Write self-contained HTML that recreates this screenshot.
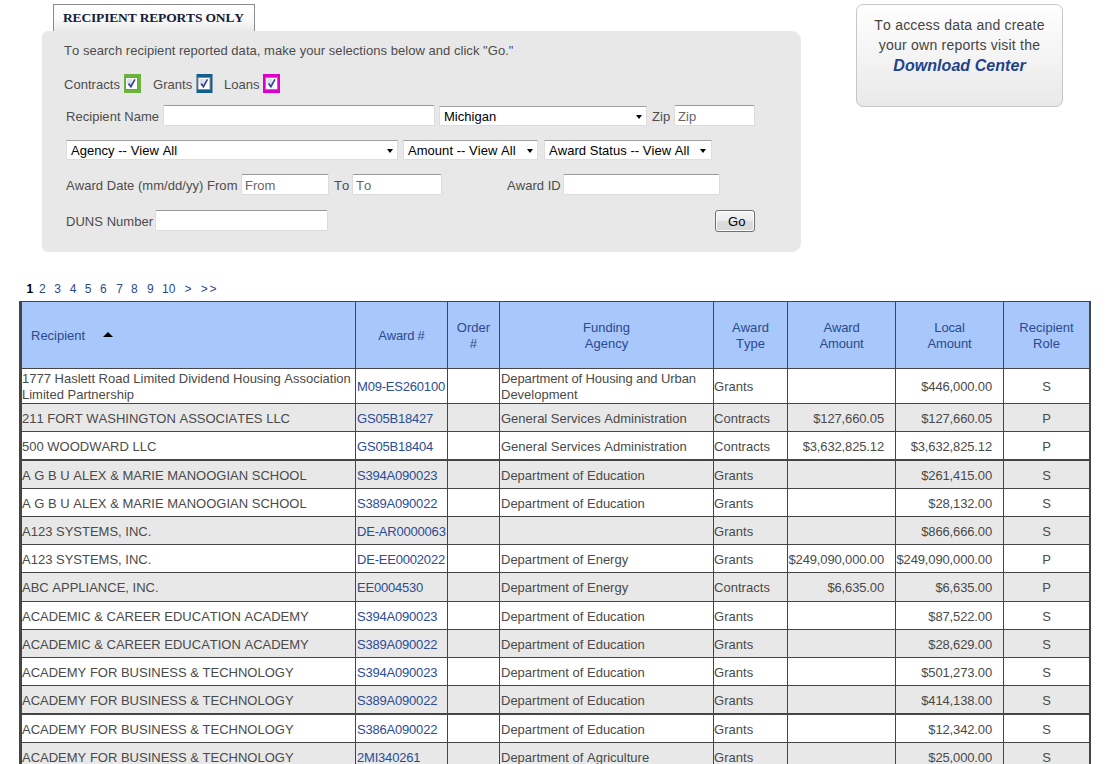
<!DOCTYPE html>
<html><head><meta charset="utf-8">
<style>
*{box-sizing:border-box;margin:0;padding:0}
html,body{width:1108px;height:764px;overflow:hidden;background:#fff}
body{position:relative;font-family:"Liberation Sans",sans-serif;font-size:13px;color:#333;letter-spacing:0.04px;font-kerning:none}
.abs{position:absolute;white-space:nowrap}
#tab{position:absolute;left:53px;top:4px;width:202px;height:28px;border:1px solid #8a8a8a;border-bottom:none;
 background:linear-gradient(#ffffff 0%,#fafafa 55%,#e8e8e8 100%);}
#tab span{position:absolute;left:9px;top:5px;font-family:"Liberation Serif",serif;font-weight:bold;font-size:13.5px;color:#14213a;letter-spacing:-0.17px}
#panel{position:absolute;left:42px;top:31px;width:759px;height:221px;background:#e8e8e8;border-radius:6px 9px 9px 6px}
.lbl{position:absolute;white-space:nowrap;color:#4c4c4c;font-size:13px}
.inp{position:absolute;background:#fff;border:1px solid #dcdcdc;border-top:1px solid #999;border-radius:2px}
.ph{position:absolute;left:3px;top:3px;color:#666;font-size:13px}
.sel{position:absolute;background:#fff;border:1px solid #dedede;border-top:1px solid #a0a0a0}
.sel span{position:absolute;left:4px;top:2px;color:#000;font-size:13px;white-space:nowrap}
.arr{position:absolute;width:0;height:0;border-left:3.5px solid transparent;border-right:3.5px solid transparent;border-top:4px solid #000}
.cb{position:absolute;width:17px;height:19px}
#go{position:absolute;left:715px;top:210px;width:40px;height:22px;border:1px solid #707070;border-radius:3px;
 background:linear-gradient(#f4f4f4 0%,#ececec 50%,#dcdcdc 51%,#d8d8d8 100%);box-shadow:inset 0 0 0 1px #fcfcfc}
#go span{position:absolute;left:12px;top:3px;color:#000;font-size:13px}
#dl{position:absolute;left:856px;top:4px;width:207px;height:103px;border:1px solid #c6c6c6;border-radius:7px;
 background:linear-gradient(#fefefe 0%,#f4f4f4 50%,#e9e9e9 100%);text-align:center;color:#444;font-size:14px;line-height:20px;padding-top:10px;letter-spacing:0.22px}
#dl b{display:block;font-style:italic;color:#22428a;font-size:16px;line-height:22px;margin-top:0px;letter-spacing:0.05px}
#pg span{position:absolute;top:282px;font-size:12px;color:#2b4a8e;white-space:nowrap}
#pg .cur{color:#000;font-weight:bold}
#grid{position:absolute;left:19px;top:301px;border-collapse:collapse;table-layout:fixed}

#grid{position:absolute;left:19px;top:301px;width:1072px;border-top:1px solid #454545;border-left:3px solid #454545}
.row{display:flex;border-bottom:1px solid #454545;color:#4a4a4a}
.row.w{background:#fff}.row.g{background:#e8e8e8}
.hdr{background:#a8c7fb}
.cell{border-right:1px solid #454545;display:flex;align-items:center;height:100%;white-space:nowrap;line-height:16px;padding-left:0;padding-top:2px}
.c1{width:334px;letter-spacing:0}.c2{width:92px;color:#2b4c97;letter-spacing:-0.2px;padding-left:1px}.c3{width:52px}.c4{width:214px;padding-left:1px;letter-spacing:0}.c5{width:74px}.c6{width:108px;justify-content:flex-end;padding-right:11px;letter-spacing:-0.14px}.c7{width:108px;justify-content:flex-end;padding-right:11px;letter-spacing:-0.14px}.c8{width:87px;border-right-width:2px;justify-content:center;padding-left:0}
.hdr .cell{justify-content:center;text-align:center;color:#2c4a8e;line-height:16px;padding:2px 0 0 0}
.hdr .c1{justify-content:flex-start;padding-left:9px;padding-top:1px}
.tri{display:inline-block;width:0;height:0;border-left:5px solid transparent;border-right:5px solid transparent;border-bottom:5px solid #000;margin-left:18px;position:relative;top:-3px}
</style></head><body>

<div id="tab"><span>RECIPIENT REPORTS ONLY</span></div>
<div id="panel"></div>

<div class="lbl" style="left:64px;top:43px">To search recipient reported data, make your selections below and click "Go."</div>

<div class="lbl" style="left:64px;top:77px">Contracts</div>
<svg class="cb" style="left:124px;top:74px" width="17" height="19" viewBox="0 0 17 19"><rect width="17" height="19" fill="#6cb33e"/><rect x="1.5" y="3.5" width="12" height="12" fill="#fff" stroke="#8a8686"/><rect x="3" y="5" width="5" height="5" fill="#dcdfea"/><path d="M4.6 9.6 L6.9 12.6 L10.9 5.4" stroke="#34469a" stroke-width="1.8" fill="none"/></svg>
<div class="lbl" style="left:153px;top:77px">Grants</div>
<svg class="cb" style="left:196px;top:74px" width="16" height="19" viewBox="0 0 16 19"><rect width="16" height="19" fill="#135e8d"/><rect x="1.5" y="3.5" width="12" height="12" fill="#fff" stroke="#8a8686"/><rect x="3" y="5" width="5" height="5" fill="#dcdfea"/><path d="M4.6 9.6 L6.9 12.6 L10.9 5.4" stroke="#34469a" stroke-width="1.8" fill="none"/></svg>
<div class="lbl" style="left:224px;top:77px">Loans</div>
<svg class="cb" style="left:263px;top:74px" width="17" height="19" viewBox="0 0 17 19"><rect width="17" height="19" fill="#dd00cc"/><rect x="2.5" y="3.5" width="12" height="12" fill="#fff" stroke="#8a8686"/><rect x="4" y="5" width="5" height="5" fill="#dcdfea"/><path d="M5.6 9.6 L7.9 12.6 L11.9 5.4" stroke="#34469a" stroke-width="1.8" fill="none"/></svg>

<div class="lbl" style="left:66px;top:109px">Recipient Name</div>
<div class="inp" style="left:163px;top:105px;width:272px;height:21px"></div>
<div class="sel" style="left:439px;top:106px;width:208px;height:20px"><span>Michigan</span><div class="arr" style="left:196px;top:8px"></div></div>
<div class="lbl" style="left:652px;top:109px">Zip</div>
<div class="inp" style="left:674px;top:105px;width:81px;height:21px"><span class="ph">Zip</span></div>

<div class="sel" style="left:66px;top:140px;width:332px;height:20px"><span>Agency -- View All</span><div class="arr" style="left:320px;top:8px"></div></div>
<div class="sel" style="left:403px;top:140px;width:135px;height:20px"><span>Amount -- View All</span><div class="arr" style="left:123px;top:8px"></div></div>
<div class="sel" style="left:544px;top:140px;width:168px;height:20px"><span>Award Status -- View All</span><div class="arr" style="left:155px;top:8px"></div></div>

<div class="lbl" style="left:66px;top:178px">Award Date (mm/dd/yy) From</div>
<div class="inp" style="left:241px;top:174px;width:88px;height:21px"><span class="ph">From</span></div>
<div class="lbl" style="left:334px;top:178px">To</div>
<div class="inp" style="left:352px;top:174px;width:90px;height:21px"><span class="ph">To</span></div>
<div class="lbl" style="left:507px;top:178px">Award ID</div>
<div class="inp" style="left:563px;top:174px;width:157px;height:21px"></div>

<div class="lbl" style="left:66px;top:214px">DUNS Number</div>
<div class="inp" style="left:155px;top:210px;width:173px;height:21px"></div>
<div id="go"><span>Go</span></div>

<div id="dl">To access data and create<br>your own reports visit the<b>Download Center</b></div>

<div id="pg"><span style="left:26.5px" class=cur>1</span><span style="left:39px">2</span><span style="left:54.2px">3</span><span style="left:69.8px">4</span><span style="left:84.8px">5</span><span style="left:100px">6</span><span style="left:116.3px">7</span><span style="left:131.1px">8</span><span style="left:147px">9</span><span style="left:162.1px">10</span><span style="left:184.4px">&gt;</span><span style="left:200.8px;letter-spacing:1.8px">&gt;&gt;</span></div>

<div id="grid">
<div class="row hdr" style="height:67px"><div class="cell c1"><div><span class="h1">Recipient</span><i class="tri"></i></div></div><div class="cell c2"><div>Award #</div></div><div class="cell c3"><div>Order<br>#</div></div><div class="cell c4"><div>Funding<br>Agency</div></div><div class="cell c5"><div>Award<br>Type</div></div><div class="cell c6"><div>Award<br>Amount</div></div><div class="cell c7"><div>Local<br>Amount</div></div><div class="cell c8"><div>Recipient<br>Role</div></div></div>
<div class="row w" style="height:35px"><div class="cell c1"><div>1777 Haslett Road Limited Dividend Housing Association<br>Limited Partnership</div></div><div class="cell c2"><div>M09-ES260100</div></div><div class="cell c3"><div></div></div><div class="cell c4"><div><span style="letter-spacing:-0.1px">Department of Housing and Urban</span><br>Development</div></div><div class="cell c5"><div>Grants</div></div><div class="cell c6"><div></div></div><div class="cell c7"><div>$446,000.00</div></div><div class="cell c8"><div>S</div></div></div>
<div class="row g" style="height:28px"><div class="cell c1"><div>211 FORT WASHINGTON ASSOCIATES LLC</div></div><div class="cell c2"><div>GS05B18427</div></div><div class="cell c3"><div></div></div><div class="cell c4"><div>General Services Administration</div></div><div class="cell c5"><div>Contracts</div></div><div class="cell c6"><div>$127,660.05</div></div><div class="cell c7"><div>$127,660.05</div></div><div class="cell c8"><div>P</div></div></div>
<div class="row w" style="height:29px;border-bottom-width:2px"><div class="cell c1"><div>500 WOODWARD LLC</div></div><div class="cell c2"><div>GS05B18404</div></div><div class="cell c3"><div></div></div><div class="cell c4"><div>General Services Administration</div></div><div class="cell c5"><div>Contracts</div></div><div class="cell c6"><div>$3,632,825.12</div></div><div class="cell c7"><div>$3,632,825.12</div></div><div class="cell c8"><div>P</div></div></div>
<div class="row g" style="height:28px"><div class="cell c1"><div>A G B U ALEX &amp; MARIE MANOOGIAN SCHOOL</div></div><div class="cell c2"><div>S394A090023</div></div><div class="cell c3"><div></div></div><div class="cell c4"><div>Department of Education</div></div><div class="cell c5"><div>Grants</div></div><div class="cell c6"><div></div></div><div class="cell c7"><div>$261,415.00</div></div><div class="cell c8"><div>S</div></div></div>
<div class="row w" style="height:28px"><div class="cell c1"><div>A G B U ALEX &amp; MARIE MANOOGIAN SCHOOL</div></div><div class="cell c2"><div>S389A090022</div></div><div class="cell c3"><div></div></div><div class="cell c4"><div>Department of Education</div></div><div class="cell c5"><div>Grants</div></div><div class="cell c6"><div></div></div><div class="cell c7"><div>$28,132.00</div></div><div class="cell c8"><div>S</div></div></div>
<div class="row g" style="height:28px"><div class="cell c1"><div>A123 SYSTEMS, INC.</div></div><div class="cell c2"><div>DE-AR0000063</div></div><div class="cell c3"><div></div></div><div class="cell c4"><div></div></div><div class="cell c5"><div>Grants</div></div><div class="cell c6"><div></div></div><div class="cell c7"><div>$866,666.00</div></div><div class="cell c8"><div>S</div></div></div>
<div class="row w" style="height:28px"><div class="cell c1"><div>A123 SYSTEMS, INC.</div></div><div class="cell c2"><div>DE-EE0002022</div></div><div class="cell c3"><div></div></div><div class="cell c4"><div>Department of Energy</div></div><div class="cell c5"><div>Grants</div></div><div class="cell c6"><div>$249,090,000.00</div></div><div class="cell c7"><div>$249,090,000.00</div></div><div class="cell c8"><div>P</div></div></div>
<div class="row g" style="height:29px"><div class="cell c1"><div>ABC APPLIANCE, INC.</div></div><div class="cell c2"><div>EE0004530</div></div><div class="cell c3"><div></div></div><div class="cell c4"><div>Department of Energy</div></div><div class="cell c5"><div>Contracts</div></div><div class="cell c6"><div>$6,635.00</div></div><div class="cell c7"><div>$6,635.00</div></div><div class="cell c8"><div>P</div></div></div>
<div class="row w" style="height:28px"><div class="cell c1"><div>ACADEMIC &amp; CAREER EDUCATION ACADEMY</div></div><div class="cell c2"><div>S394A090023</div></div><div class="cell c3"><div></div></div><div class="cell c4"><div>Department of Education</div></div><div class="cell c5"><div>Grants</div></div><div class="cell c6"><div></div></div><div class="cell c7"><div>$87,522.00</div></div><div class="cell c8"><div>S</div></div></div>
<div class="row g" style="height:28px"><div class="cell c1"><div>ACADEMIC &amp; CAREER EDUCATION ACADEMY</div></div><div class="cell c2"><div>S389A090022</div></div><div class="cell c3"><div></div></div><div class="cell c4"><div>Department of Education</div></div><div class="cell c5"><div>Grants</div></div><div class="cell c6"><div></div></div><div class="cell c7"><div>$28,629.00</div></div><div class="cell c8"><div>S</div></div></div>
<div class="row w" style="height:28px"><div class="cell c1"><div>ACADEMY FOR BUSINESS &amp; TECHNOLOGY</div></div><div class="cell c2"><div>S394A090023</div></div><div class="cell c3"><div></div></div><div class="cell c4"><div>Department of Education</div></div><div class="cell c5"><div>Grants</div></div><div class="cell c6"><div></div></div><div class="cell c7"><div>$501,273.00</div></div><div class="cell c8"><div>S</div></div></div>
<div class="row g" style="height:29px;border-bottom-width:2px"><div class="cell c1"><div>ACADEMY FOR BUSINESS &amp; TECHNOLOGY</div></div><div class="cell c2"><div>S389A090022</div></div><div class="cell c3"><div></div></div><div class="cell c4"><div>Department of Education</div></div><div class="cell c5"><div>Grants</div></div><div class="cell c6"><div></div></div><div class="cell c7"><div>$414,138.00</div></div><div class="cell c8"><div>S</div></div></div>
<div class="row w" style="height:28px"><div class="cell c1"><div>ACADEMY FOR BUSINESS &amp; TECHNOLOGY</div></div><div class="cell c2"><div>S386A090022</div></div><div class="cell c3"><div></div></div><div class="cell c4"><div>Department of Education</div></div><div class="cell c5"><div>Grants</div></div><div class="cell c6"><div></div></div><div class="cell c7"><div>$12,342.00</div></div><div class="cell c8"><div>S</div></div></div>
<div class="row g" style="height:28px"><div class="cell c1"><div>ACADEMY FOR BUSINESS &amp; TECHNOLOGY</div></div><div class="cell c2"><div>2MI340261</div></div><div class="cell c3"><div></div></div><div class="cell c4"><div>Department of Agriculture</div></div><div class="cell c5"><div>Grants</div></div><div class="cell c6"><div></div></div><div class="cell c7"><div>$25,000.00</div></div><div class="cell c8"><div>S</div></div></div>
</div>
</body></html>
